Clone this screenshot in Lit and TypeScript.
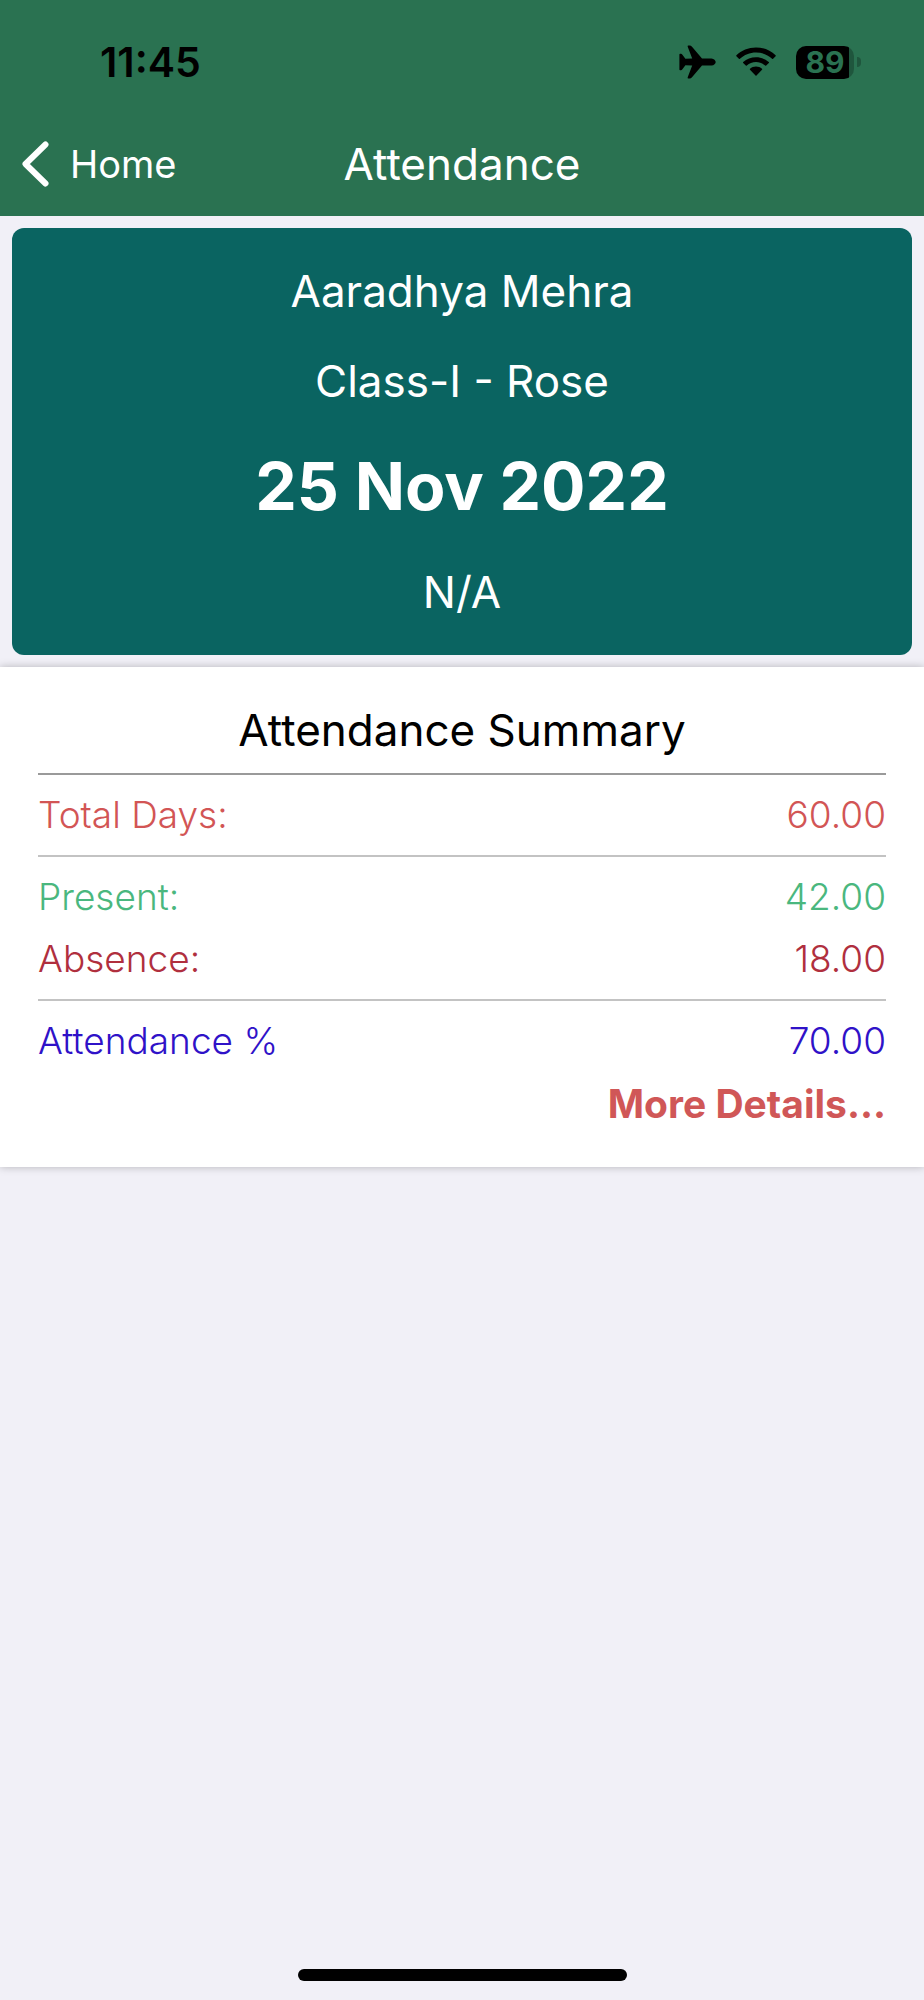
import { LitElement, html, css } from "lit";
import { customElement, property } from "lit/decorators.js";

interface SummaryRow {
  label: string;
  value: string;
  tone: "total" | "present" | "absent" | "percent";
}

@customElement("status-bar")
class StatusBar extends LitElement {
  static styles = css`
    :host {
      display: flex;
      justify-content: space-between;
      align-items: center;
      height: 124px;
      padding: 0 63px 0 100px;
      color: #000;
    }
    .time {
      font-size: 41px;
      font-weight: 600;
      line-height: 48px;
    }
    .icons {
      display: flex;
      align-items: center;
      gap: 20px;
    }
    .icons svg {
      display: block;
    }
    .battery {
      display: flex;
      align-items: center;
      gap: 3px;
    }
    .cell {
      width: 58px;
      height: 33px;
      border-radius: 10px;
      background: linear-gradient(to right, #000 53px, #1f563d 53px);
      color: #2a7251;
      font-size: 30px;
      font-weight: 700;
      line-height: 33px;
      text-align: center;
    }
    .nub {
      width: 4px;
      height: 10px;
      border-radius: 0 4px 4px 0;
      background: #1f563d;
    }
  `;

  render() {
    return html`
      <span class="time">11:45</span>
      <div class="icons">
        <svg width="37" height="34" viewBox="0 0 37 34" aria-label="Airplane mode">
          <path d="M32.5 13.4 H23 L13 1.8 Q12 .6 10.6 .6 H9.4 Q8.3 .6 8.7 1.8 L13.2 13.4 L6.4 13.7 L3.2 9.4 Q2.7 8.8 2 8.8 H1.2 Q.4 8.8 .4 9.6 V24.4 Q.4 25.2 1.2 25.2 H2 Q2.7 25.2 3.2 24.6 L6.4 20.3 L13.2 20.6 L8.7 32.2 Q8.3 33.4 9.4 33.4 H10.6 Q12 33.4 13 32.2 L23 20.6 H32.5 C35 20.3 36.7 18.6 36.7 17 S35 13.7 32.5 13.4 Z" />
        </svg>
        <svg width="40" height="30" viewBox="0 0 40 30" aria-label="Wi-Fi">
          <path d="M20 .5 C12.4 .5 5.4 3.4 .4 8.3 Q0 8.8 .4 9.3 L2.9 11.8 Q3.4 12.2 3.9 11.8 C8.1 7.7 13.8 5.4 20 5.4 S31.9 7.7 36.1 11.8 Q36.6 12.2 37.1 11.8 L39.6 9.3 Q40 8.8 39.6 8.3 C34.6 3.4 27.6 .5 20 .5 Z" />
          <path d="M20 10.2 C15.1 10.2 10.6 12 7.2 15.1 Q6.7 15.6 7.2 16.1 L9.8 18.6 Q10.3 19.1 10.8 18.6 C13.2 16.4 16.5 15.1 20 15.1 S26.8 16.4 29.2 18.6 Q29.7 19.1 30.2 18.6 L32.8 16.1 Q33.3 15.6 32.8 15.1 C29.4 12 24.9 10.2 20 10.2 Z" />
          <path d="M20 19.6 C17.7 19.6 15.6 20.4 14 21.8 Q13.5 22.3 14 22.8 L19.5 28.5 Q20 29 20.5 28.5 L26 22.8 Q26.5 22.3 26 21.8 C24.4 20.4 22.3 19.6 20 19.6 Z" />
        </svg>
        <div class="battery">
          <div class="cell">89</div>
          <div class="nub"></div>
        </div>
      </div>
    `;
  }
}

@customElement("nav-bar")
class NavBar extends LitElement {
  @property() heading = "";

  static styles = css`
    :host {
      display: grid;
      grid-template-columns: 1fr auto 1fr;
      align-items: center;
      height: 80px;
      padding: 0 22px 12px;
      color: #fff;
    }
    .back {
      display: flex;
      align-items: center;
      gap: 21px;
      color: inherit;
      font-size: 38px;
      line-height: 48px;
      text-decoration: none;
    }
    .back svg {
      display: block;
    }
    .heading {
      margin: 0;
      font-size: 44px;
      font-weight: 400;
      line-height: 48px;
    }
  `;

  render() {
    return html`
      <a class="back" href="#home">
        <svg width="27" height="46" viewBox="0 0 27 46" fill="none" stroke="#fff" stroke-width="6" stroke-linecap="round" stroke-linejoin="round" aria-hidden="true">
          <path d="M23.5 3.5 L3.5 23 L23.5 42.5" />
        </svg>
        Home
      </a>
      <h1 class="heading">${this.heading}</h1>
    `;
  }
}

@customElement("student-card")
class StudentCard extends LitElement {
  static styles = css`
    :host {
      display: block;
      margin: 12px;
      padding: 18px 24px;
      border-radius: 12px;
      background: #0a6461;
      color: #fff;
      text-align: center;
    }
    .line {
      margin: 0;
      font-size: 44px;
      line-height: 90px;
    }
    .date {
      margin: 0;
      font-size: 66px;
      font-weight: 700;
      line-height: 121px;
    }
  `;

  render() {
    return html`
      <p class="line">Aaradhya Mehra</p>
      <p class="line">Class-I - Rose</p>
      <p class="date">25 Nov 2022</p>
      <p class="line">N/A</p>
    `;
  }
}

@customElement("attendance-summary")
class AttendanceSummary extends LitElement {
  private groups: SummaryRow[][] = [
    [{ label: "Total Days:", value: "60.00", tone: "total" }],
    [
      { label: "Present:", value: "42.00", tone: "present" },
      { label: "Absence:", value: "18.00", tone: "absent" },
    ],
    [{ label: "Attendance %", value: "70.00", tone: "percent" }],
  ];

  static styles = css`
    :host {
      display: block;
      padding: 31px 38px;
      background: #fff;
      box-shadow: 0 0 8px rgba(0, 0, 0, 0.25);
    }
    .title {
      margin: 0;
      padding-bottom: 11px;
      color: #000;
      font-size: 44px;
      font-weight: 400;
      line-height: 64px;
      text-align: center;
    }
    .group {
      margin: 0;
      padding: 9px 0;
      border-top: 2px solid #c3c3c3;
    }
    .group:first-of-type {
      border-top-color: #9a9a9a;
    }
    .group:last-of-type {
      padding-bottom: 0;
    }
    .row {
      display: flex;
      justify-content: space-between;
      font-size: 37px;
      font-weight: 300;
      line-height: 62px;
    }
    .row dt,
    .row dd {
      margin: 0;
    }
    .total {
      color: #d25555;
    }
    .present {
      color: #4ab77e;
    }
    .absent {
      color: #b02f3e;
    }
    .percent {
      color: #2f12c8;
    }
    .more {
      display: block;
      color: #d05757;
      font-size: 39px;
      font-weight: 700;
      line-height: 64px;
      text-align: right;
      text-decoration: none;
    }
  `;

  render() {
    return html`
      <h2 class="title">Attendance Summary</h2>
      ${this.groups.map(
        (rows) => html`
          <dl class="group">
            ${rows.map(
              (row) => html`
                <div class="row ${row.tone}">
                  <dt>${row.label}</dt>
                  <dd>${row.value}</dd>
                </div>
              `
            )}
          </dl>
        `
      )}
      <a class="more" href="#details">More Details...</a>
    `;
  }
}

@customElement("app-root")
class AppRoot extends LitElement {
  static styles = css`
    :host {
      display: flex;
      flex-direction: column;
      min-height: 100vh;
      background: #f1f0f7;
      font-family: Inter, "Liberation Sans", sans-serif;
    }
    .top {
      background: #2a7251;
    }
    .home-indicator {
      width: 329px;
      max-width: 60%;
      height: 12px;
      margin: auto auto 19px;
      border-radius: 6px;
      background: #000;
    }
  `;

  render() {
    return html`
      <header class="top">
        <status-bar></status-bar>
        <nav-bar heading="Attendance"></nav-bar>
      </header>
      <main>
        <student-card></student-card>
        <attendance-summary></attendance-summary>
      </main>
      <div class="home-indicator"></div>
    `;
  }
}
